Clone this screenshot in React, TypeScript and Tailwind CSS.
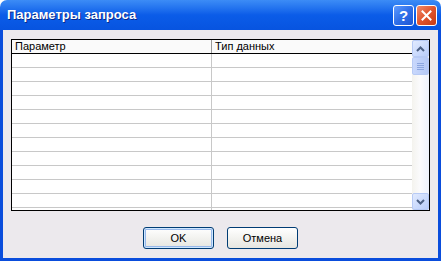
import React from 'react';

const rows = Array.from({ length: 11 });

function HelpButton() {
  return (
    <div className="w-[21px] h-[21px] rounded-[3px] border border-white bg-gradient-to-br from-[#5f9bff] via-[#2f6fe8] to-[#1d55d4] flex items-center justify-center text-white font-bold text-[15px] leading-none">
      ?
    </div>
  );
}

function CloseButton() {
  return (
    <div className="w-[21px] h-[21px] rounded-[3px] border border-white bg-gradient-to-br from-[#f08a6a] via-[#e0542d] to-[#c63a12] flex items-center justify-center">
      <svg width="11" height="11" viewBox="0 0 11 11">
        <path d="M1.5 1.5 L9.5 9.5 M9.5 1.5 L1.5 9.5" stroke="white" strokeWidth="2" strokeLinecap="square" />
      </svg>
    </div>
  );
}

function ScrollArrow({ dir }: { dir: 'up' | 'down' }) {
  return (
    <div className="w-[17px] h-[17px] rounded-[2px] border border-[#b7caf5] bg-gradient-to-br from-[#e1eafe] to-[#b9cdfa] flex items-center justify-center">
      <svg width="9" height="6" viewBox="0 0 9 6">
        <path
          d={dir === 'up' ? 'M1 5 L4.5 1.5 L8 5' : 'M1 1 L4.5 4.5 L8 1'}
          fill="none"
          stroke="#4d6185"
          strokeWidth="2"
        />
      </svg>
    </div>
  );
}

function Thumb() {
  return (
    <div className="w-[17px] h-[18px] rounded-[2px] border border-[#b7caf5] bg-gradient-to-r from-[#c9d8fc] to-[#b4c8f6] flex flex-col items-center justify-center gap-[1px]">
      {[0, 1, 2, 3].map(i => (
        <div key={i} className="w-[7px] h-[1px] bg-[#8ca6e0]" />
      ))}
    </div>
  );
}

export default function App() {
  return (
    <div className="w-[441px] h-[261px] flex flex-col bg-white font-['Liberation_Sans',Arial,sans-serif] text-[11px] text-black">
      <div className="h-[30px] shrink-0 rounded-t-[7px] bg-gradient-to-b from-[#3c8cf6] via-[#0b5ce8] to-[#0754e0] flex items-center pl-[7px] pr-[4px]">
        <span className="text-white font-bold text-[13px] [text-shadow:1px_1px_0_#0a2a8a]">Параметры запроса</span>
        <div className="ml-auto flex gap-[2px]">
          <HelpButton />
          <CloseButton />
        </div>
      </div>

      <div className="flex-1 flex flex-col bg-[#ece9ed] border-x-[3px] border-b-[3px] border-[#0a4ddc] px-[8px] pt-[9px]">
        <div className="h-[172px] border border-black flex bg-white">
          <div className="flex-1 flex flex-col overflow-hidden">
            <div className="h-[14px] shrink-0 flex border-b border-black bg-[#fafafa]">
              <div className="w-[200px] border-r border-[#9a9a9a] pl-[3px] leading-[13px]">Параметр</div>
              <div className="flex-1 pl-[3px] leading-[13px]">Тип данных</div>
            </div>
            {rows.map((_, i) => (
              <div key={i} className="h-[14px] shrink-0 flex border-b border-[#c8c8c8]">
                <div className="w-[200px] border-r border-[#c8c8c8]" />
                <div className="flex-1" />
              </div>
            ))}
            <div className="flex-1 flex">
              <div className="w-[200px] border-r border-[#c8c8c8]" />
            </div>
          </div>
          <div className="w-[17px] flex flex-col bg-gradient-to-r from-[#f4f3ee] via-[#fbfbfd] to-[#eef2fc]">
            <ScrollArrow dir="up" />
            <Thumb />
            <div className="flex-1" />
            <ScrollArrow dir="down" />
          </div>
        </div>

        <div className="flex justify-center gap-[13px] mt-[16px]">
          <button className="w-[71px] h-[22px] rounded-[3px] border border-[#003c74] bg-gradient-to-b from-white to-[#e6e6e0] shadow-[inset_0_0_0_1px_#cee7ff,inset_0_0_0_2px_#98b8ea] text-[11px]">
            OK
          </button>
          <button className="w-[71px] h-[22px] rounded-[3px] border border-[#003c74] bg-gradient-to-b from-white to-[#e6e6e0] text-[11px]">
            Отмена
          </button>
        </div>
      </div>
    </div>
  );
}
